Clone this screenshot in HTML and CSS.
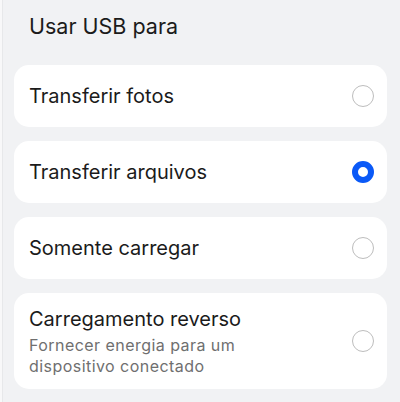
FILE: index.html
```html
<!DOCTYPE html>
<html lang="pt">
<head>
<meta charset="utf-8">
<link rel="stylesheet" href="styles.css">
</head>
<body>
<div class="page">
  <h1 class="title">Usar USB para</h1>
  <div class="list">
    <div class="card">
      <div class="text"><div class="label">Transferir fotos</div></div>
      <span class="radio"></span>
    </div>
    <div class="card">
      <div class="text"><div class="label">Transferir arquivos</div></div>
      <span class="radio checked"></span>
    </div>
    <div class="card">
      <div class="text"><div class="label">Somente carregar</div></div>
      <span class="radio"></span>
    </div>
    <div class="card tall">
      <div class="text">
        <div class="label">Carregamento reverso</div>
        <div class="sub">Fornecer energia para um<br>dispositivo conectado</div>
      </div>
      <span class="radio"></span>
    </div>
  </div>
</div>
</body>
</html>
```
FILE: styles.css
```css
html, body {
  margin: 0;
  padding: 0;
  background: #f1f2f4;
}
body {
  width: 400px;
  height: 402px;
  overflow: hidden;
  font-family: Inter, Roboto, sans-serif;
  color: #1b1b1b;
  background: linear-gradient(to right, #f8f8f9 0 2px, #e7e8ea 2px 3px, #f1f2f4 3px);
}
.page {
  padding: 12px 13px 0 14px;
}
.title {
  margin: 0 0 25px 15px;
  font-size: 21.5px;
  line-height: 28px;
  font-weight: 400;
}
.list {
  display: flex;
  flex-direction: column;
  gap: 14px;
}
.card {
  background: #ffffff;
  border-radius: 15px;
  height: 62px;
  box-sizing: border-box;
  padding: 0 13px 0 15px;
  display: flex;
  align-items: center;
  justify-content: space-between;
}
.card.tall {
  height: 96px;
  padding-top: 13px;
  padding-bottom: 11px;
  align-items: flex-start;
}
.card.tall .radio {
  align-self: center;
  margin-top: -2px;
}
.label {
  font-size: 20px;
  line-height: 26px;
}
.sub {
  margin-top: 3px;
  font-size: 16px;
  letter-spacing: 0.45px;
  line-height: 21px;
  color: #6f6f6f;
}
.radio {
  width: 22px;
  height: 22px;
  box-sizing: border-box;
  border-radius: 50%;
  border: 1.5px solid #bdbdbd;
  flex: none;
}
.radio.checked {
  border: 6.5px solid #0a59f7;
}
```
